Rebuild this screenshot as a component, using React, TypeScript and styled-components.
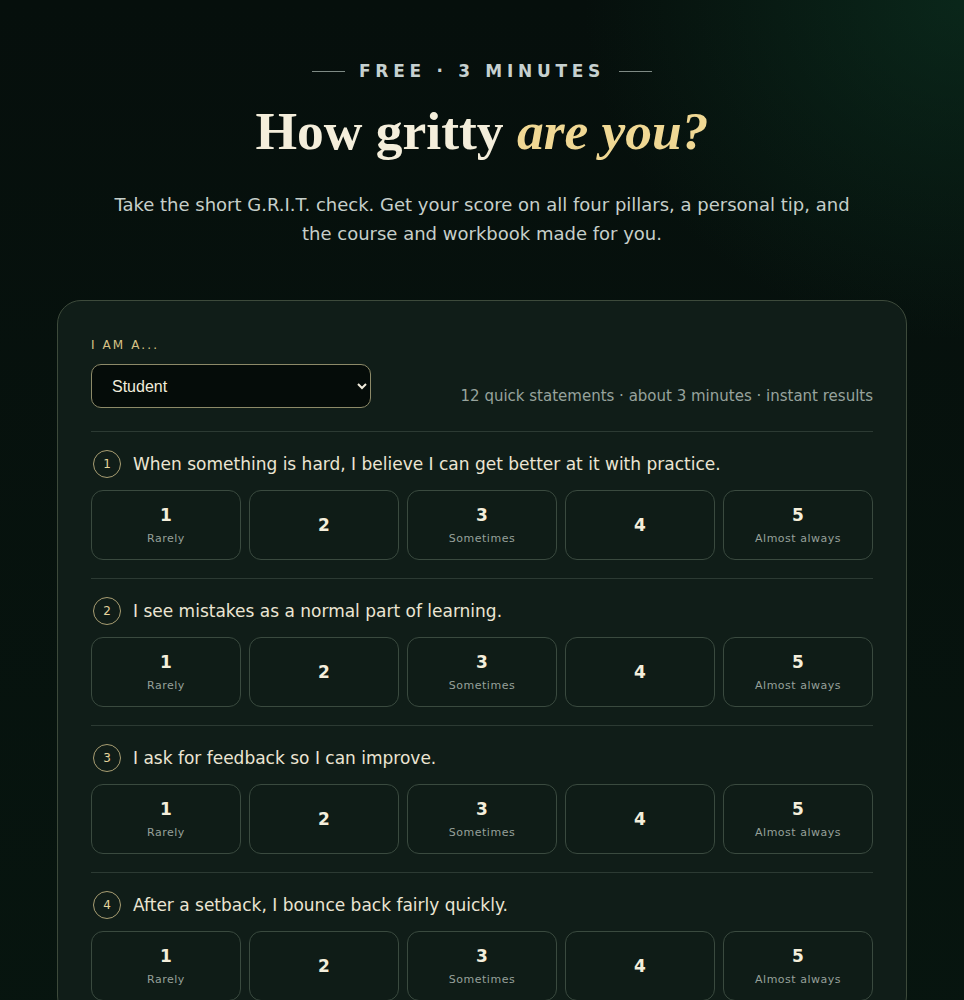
import React, { useState } from 'react';
import styled, { createGlobalStyle } from 'styled-components';

const questions = [
  'When something is hard, I believe I can get better at it with practice.',
  'I see mistakes as a normal part of learning.',
  'I ask for feedback so I can improve.',
  'After a setback, I bounce back fairly quickly.',
];

const scale = [
  { value: 1, label: 'Rarely' },
  { value: 2, label: '' },
  { value: 3, label: 'Sometimes' },
  { value: 4, label: '' },
  { value: 5, label: 'Almost always' },
];

function App() {
  const [role, setRole] = useState('Student');
  const [answers, setAnswers] = useState<Record<number, number>>({});

  return (
    <Page>
      <GlobalStyle />
      <Hero>
        <Eyebrow>
          <Rule />
          FREE · 3 MINUTES
          <Rule />
        </Eyebrow>
        <Title>
          How gritty <Accent>are you?</Accent>
        </Title>
        <Lead>
          Take the short G.R.I.T. check. Get your score on all four pillars, a personal tip, and the
          course and workbook made for you.
        </Lead>
      </Hero>

      <Card>
        <TopRow>
          <RoleField>
            <FieldLabel>I AM A...</FieldLabel>
            <Select value={role} onChange={(e) => setRole(e.target.value)}>
              <option>Student</option>
              <option>Parent</option>
              <option>Teacher</option>
              <option>Professional</option>
            </Select>
          </RoleField>
          <Meta>12 quick statements · about 3 minutes · instant results</Meta>
        </TopRow>

        {questions.map((q, i) => (
          <Question key={q}>
            <Prompt>
              <Badge>{i + 1}</Badge>
              <PromptText>{q}</PromptText>
            </Prompt>
            <Options>
              {scale.map((s) => (
                <Option
                  key={s.value}
                  $active={answers[i] === s.value}
                  onClick={() => setAnswers({ ...answers, [i]: s.value })}
                >
                  <OptionValue>{s.value}</OptionValue>
                  {s.label && <OptionLabel>{s.label}</OptionLabel>}
                </Option>
              ))}
            </Options>
          </Question>
        ))}
      </Card>
    </Page>
  );
}

export default App;

const GlobalStyle = createGlobalStyle`
  * { box-sizing: border-box; }
  body {
    margin: 0;
    background: #06100c;
    font-family: "DejaVu Sans", sans-serif;
  }
`;

const Page = styled.div`
  min-height: 1000px;
  padding: 59px 57px 40px;
  background:
    radial-gradient(ellipse 380px 340px at 100% 0%, rgba(14, 62, 40, 0.5), rgba(14, 62, 40, 0) 100%),
    linear-gradient(180deg, #060f0c 0%, #07150f 100%);
`;

const Hero = styled.header`
  display: flex;
  flex-direction: column;
  align-items: center;
  text-align: center;
`;

const Eyebrow = styled.div`
  display: flex;
  align-items: center;
  gap: 14px;
  font-size: 17px;
  font-weight: bold;
  letter-spacing: 4.7px;
  color: #c6d1d0;
  line-height: 24px;
`;

const Rule = styled.span`
  display: block;
  width: 33px;
  height: 1px;
  background: #7e8a84;
`;

const Title = styled.h1`
  margin: 15px 0 0;
  font-family: "Liberation Serif", serif;
  font-weight: bold;
  font-size: 53.5px;
  line-height: 66px;
  color: #f4eedb;
`;

const Accent = styled.em`
  font-style: italic;
  color: #f0d894;
`;

const Lead = styled.p`
  margin: 26px 0 0;
  max-width: 750px;
  font-size: 18px;
  line-height: 29px;
  color: #c6cfca;
`;

const Card = styled.section`
  margin-top: 52px;
  padding: 37px 33px 0;
  background: #101d18;
  border: 1px solid #3d4a3b;
  border-radius: 24px;
`;

const TopRow = styled.div`
  display: flex;
  align-items: flex-end;
  justify-content: space-between;
  padding-bottom: 23px;
`;

const RoleField = styled.div`
  display: flex;
  flex-direction: column;
  gap: 12px;
`;

const FieldLabel = styled.span`
  font-size: 12px;
  letter-spacing: 2.1px;
  color: #d8c285;
`;

const Select = styled.select`
  width: 280px;
  height: 44px;
  padding: 0 12px 0 16px;
  background: #050c09;
  color: #f1ecdc;
  border: 1px solid #8d8a68;
  border-radius: 10px;
  font-family: "Liberation Sans", Arial, sans-serif;
  font-size: 16px;
`;

const Meta = styled.span`
  font-size: 15px;
  color: #97a39d;
  padding-bottom: 3px;
`;

const Question = styled.div`
  border-top: 1px solid #2c3a33;
  padding: 18px 0;
`;

const Prompt = styled.div`
  display: flex;
  align-items: center;
  gap: 12px;
  padding-left: 2px;
`;

const Badge = styled.span`
  display: flex;
  align-items: center;
  justify-content: center;
  width: 28px;
  height: 28px;
  border-radius: 50%;
  border: 1px solid #a89d72;
  font-size: 12px;
  color: #e6d59c;
`;

const PromptText = styled.span`
  font-size: 17px;
  color: #ebe5d3;
`;

const Options = styled.div`
  display: grid;
  grid-template-columns: repeat(5, 1fr);
  gap: 8px;
  margin-top: 12px;
`;

const Option = styled.button<{ $active: boolean }>`
  display: flex;
  flex-direction: column;
  align-items: center;
  justify-content: center;
  gap: 7px;
  height: 70px;
  background: ${(p) => (p.$active ? '#1d2c20' : '#0f1c17')};
  border: 1px solid ${(p) => (p.$active ? '#d8c285' : '#3a4a3f')};
  border-radius: 12px;
  cursor: pointer;
  font-family: "DejaVu Sans", sans-serif;
`;

const OptionValue = styled.span`
  font-size: 17px;
  font-weight: bold;
  color: #f4eedb;
`;

const OptionLabel = styled.span`
  font-size: 11px;
  letter-spacing: 0.5px;
  color: #96a09a;
`;
